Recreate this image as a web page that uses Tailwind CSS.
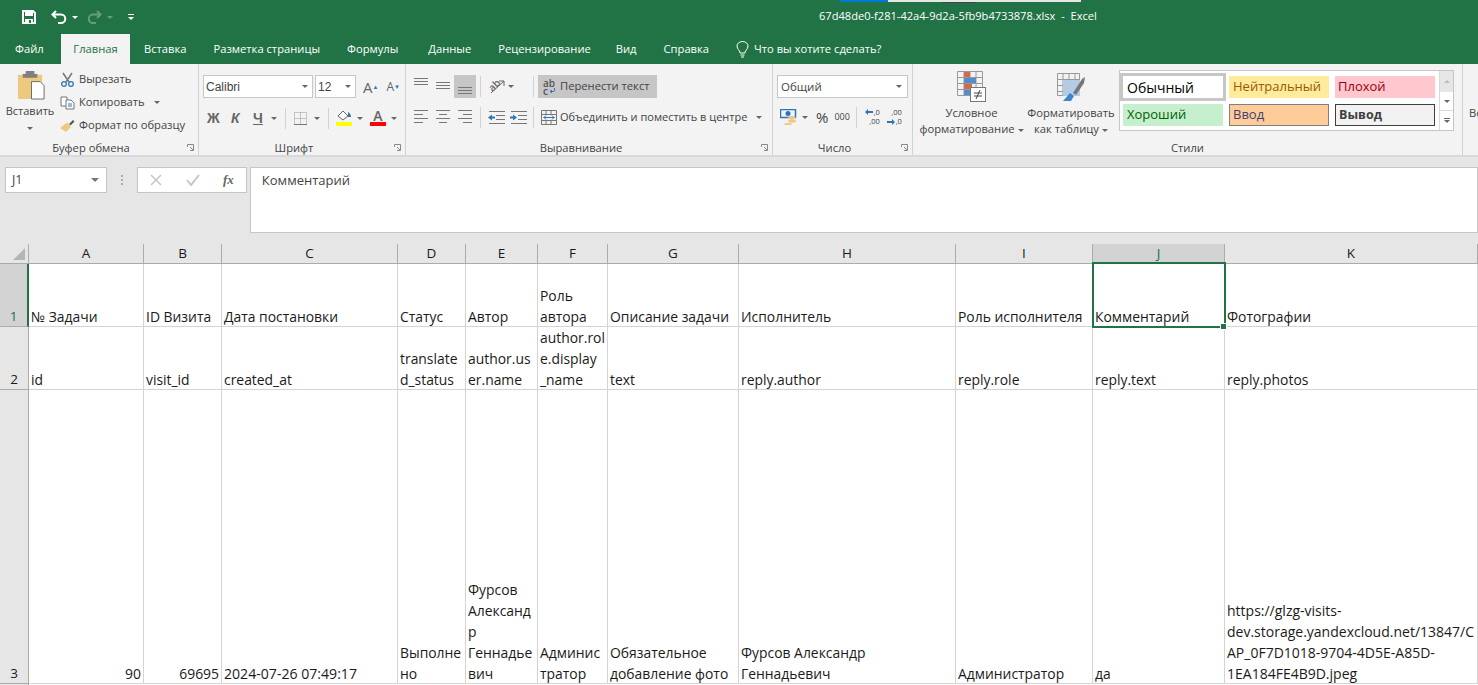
<!DOCTYPE html>
<html lang="ru">
<head>
<meta charset="UTF-8">
<title>67d48de0-f281-42a4-9d2a-5fb9b4733878.xlsx - Excel</title>
<script src="https://cdn.jsdelivr.net/npm/@tailwindcss/browser@4"></script>
</head>
<body class="w-[1478px] h-[685px] overflow-hidden bg-white font-['Open_Sans',sans-serif] text-[11.2px] text-[#444]">

<!-- title bar + tabs -->
<div class="h-[64px] bg-[#217346] text-white relative">
  <div class="h-[34px] flex items-center pl-[22px]">
    <svg width="14" height="14" viewBox="0 0 14 14"><path d="M1 1h10l2 2v10H1z" fill="none" stroke="#fff" stroke-width="2"/><path d="M3 1h8v5H3zM3 9h8v4H3z" fill="#fff"/><path d="M7 10h2v3H7z" fill="#217346"/></svg>
    <div class="flex items-center gap-[4px] ml-[15px]">
      <svg width="17" height="14" viewBox="0 0 17 14"><path d="M5 1 1.500 4.500 5 8M2 4.500h8a4 4 0 0 1 0 8.500H7" fill="none" stroke="#fff" stroke-width="2"/></svg>
      <span class="w-0 h-0 border-x-[3px] border-x-transparent border-t-[3px] border-t-white"></span>
    </div>
    <div class="flex items-center gap-[5px] opacity-30 ml-[9px]">
      <svg width="15" height="14" viewBox="0 0 15 14"><path d="M10 1l3.500 3.500L10 8M13 4.500H6a4 4 0 0 0 0 8.500h3" fill="none" stroke="#fff" stroke-width="2"/></svg>
      <span class="w-0 h-0 border-x-[3px] border-x-transparent border-t-[3px] border-t-white"></span>
    </div>
    <div class="flex flex-col items-center gap-[2px] ml-[15px]">
      <span class="w-[6px] h-px bg-white"></span>
      <span class="w-0 h-0 border-x-[3px] border-x-transparent border-t-[3px] border-t-white"></span>
    </div>
  </div>
  <div class="absolute left-[819px] top-[8px] text-[11.100px] whitespace-nowrap">67d48de0-f281-42a4-9d2a-5fb9b4733878.xlsx&nbsp; -&nbsp; Excel</div>
  <div class="absolute left-[840px] top-0 w-[48px] h-[2px] bg-[#0078d7]"></div>
  <div class="absolute left-[888px] top-0 w-[193px] h-[2px] bg-[#e6e6e6]"></div>
  <div class="absolute left-[942px] top-[2px] w-[34px] h-px bg-[#444]"></div>
  <div class="h-[30px] flex items-center text-[11.200px] whitespace-nowrap">
    <span class="w-[61px] pl-[15px]">Файл</span>
    <span class="w-[69px] h-[30px] bg-[#f3f3f3] text-[#217346] flex items-center justify-center">Главная</span>
    <span class="ml-[14px]">Вставка</span>
    <span class="ml-[27px]">Разметка страницы</span>
    <span class="ml-[27px]">Формулы</span>
    <span class="ml-[30px]">Данные</span>
    <span class="ml-[27px]">Рецензирование</span>
    <span class="ml-[25px]">Вид</span>
    <span class="ml-[27px]">Справка</span>
    <svg class="ml-[27px] mr-[5px]" width="13" height="17" viewBox="0 0 13 17"><path d="M4 12c0-3-3-3.500-3-7a5.500 4.500 0 0 1 11 0c0 3.500-3 4-3 7zM4.500 14h4M5 16h3" fill="none" stroke="#fff"/></svg>
    <span>Что вы хотите сделать?</span>
  </div>
</div>

<!-- ribbon -->
<div class="h-[93px] bg-[#f3f3f3] border-b-2 border-[#d9d9d9] flex relative">

  <!-- clipboard -->
  <div class="w-[199px] h-[91px] border-r border-[#d2d2d2] relative shrink-0">
    <div class="flex h-[76px]">
      <div class="w-[60px] flex flex-col items-center pt-[7px]">
        <svg class="ml-[3px]" width="29" height="29" viewBox="0 0 30 30"><rect x="1" y="4" width="25" height="25" rx="1" fill="#edc87e"/><rect x="9" y="0" width="9" height="6" fill="#7f7f7f"/><rect x="6" y="3" width="15" height="4" fill="#7f7f7f"/><path d="M15 11h9l4 4v14H15z" fill="#fff" stroke="#6d6d6d"/></svg>
        <span class="mt-[3px] text-[11px]">Вставить</span>
        <span class="mt-[7px] w-0 h-0 border-x-[3px] border-x-transparent border-t-[3px] border-t-[#666]"></span>
      </div>
      <div class="flex flex-col pt-[4px] whitespace-nowrap">
        <div class="h-[23px] flex items-center gap-[4px]">
          <svg width="15" height="15" viewBox="0 0 15 15"><path d="M3 1l6 9M12 1l-6 9" stroke="#777" stroke-width="1.500"/><circle cx="4" cy="12" r="2.300" fill="none" stroke="#2f75b5" stroke-width="1.300"/><circle cx="11" cy="12" r="2.300" fill="none" stroke="#2f75b5" stroke-width="1.300"/></svg>
          <span>Вырезать</span>
        </div>
        <div class="h-[23px] flex items-center gap-[4px]">
          <svg width="15" height="14" viewBox="0 0 15 14"><path d="M1 1h6v9H1z" fill="#fff" stroke="#777"/><path d="M6 4h5l3 3v6H6z" fill="#fff" stroke="#777"/><path d="M8 8h4M8 10h4" stroke="#2f75b5"/></svg>
          <span>Копировать</span>
          <span class="ml-[5px] w-0 h-0 border-x-[3px] border-x-transparent border-t-[3px] border-t-[#666]"></span>
        </div>
        <div class="h-[23px] flex items-center gap-[4px]">
          <svg width="15" height="14" viewBox="0 0 15 14"><path d="M9 5l4-4 1.500 1.500-4 4z" fill="#555"/><path d="M7 3.500 11 8 6 13 0 9z" fill="#edc87e"/></svg>
          <span>Формат по образцу</span>
        </div>
      </div>
    </div>
    <div class="absolute left-0 right-[16px] top-[76px] text-center whitespace-nowrap">Буфер обмена</div>
    <svg class="absolute right-[4px] bottom-[4px]" width="7" height="7" viewBox="0 0 7 7"><path d="M.5 3V.5H6.500V6.500H3M3 3l3 3" fill="none" stroke="#888"/></svg>
  </div>

  <!-- font -->
  <div class="w-[207px] h-[91px] border-r border-[#d2d2d2] relative shrink-0 pl-[4px]">
    <div class="flex items-center mt-[11px] gap-[2px]">
      <div class="w-[110px] h-[23px] bg-white border border-[#c6c6c6] flex items-center justify-between px-[2px] font-['Liberation_Sans',sans-serif] text-[12px]">Calibri<span class="w-0 h-0 mr-[2px] border-x-[3px] border-x-transparent border-t-[3px] border-t-[#666]"></span></div>
      <div class="w-[41px] h-[23px] bg-white border border-[#c6c6c6] flex items-center justify-between px-[2px] font-['Liberation_Sans',sans-serif] text-[12px]">12<span class="w-0 h-0 mr-[2px] border-x-[3px] border-x-transparent border-t-[3px] border-t-[#666]"></span></div>
      <div class="ml-[5px] flex items-start gap-[8px] text-[#666]">
        <span class="text-[15px] leading-[16px]">A<span class="align-top text-[#2f75b5] text-[6px]">▲</span></span>
        <span class="text-[12px] leading-[16px]">A<span class="align-top text-[#2f75b5] text-[6px]">▼</span></span>
      </div>
    </div>
    <div class="flex items-center h-[22px] mt-[9px] pl-[4px] text-[#666] whitespace-nowrap">
      <span class="w-[24px] font-bold font-['Liberation_Sans',sans-serif] text-[14px]">Ж</span>
      <span class="w-[22px] font-bold italic font-['Liberation_Sans',sans-serif] text-[14px]">К</span>
      <span class="w-[18px] font-bold underline font-['Liberation_Sans',sans-serif] text-[14px]">Ч</span>
      <span class="w-0 h-0 border-x-[3px] border-x-transparent border-t-[3px] border-t-[#666]"></span>
      <span class="w-px h-[21px] bg-[#d2d2d2] mx-[8px]"></span>
      <svg width="13" height="13" viewBox="0 0 13 13"><path d="M.5.500h12v12H.5zM6.500.500v12M.5 6.500h12" fill="none" stroke="#999" stroke-dasharray="1 1"/><path d="M0 12.500h13" stroke="#777"/></svg>
      <span class="ml-[7px] w-0 h-0 border-x-[3px] border-x-transparent border-t-[3px] border-t-[#666]"></span>
      <span class="w-px h-[21px] bg-[#d2d2d2] ml-[8px] mr-[7px]"></span>
      <div class="flex flex-col items-center w-[16px]">
        <svg width="16" height="11" viewBox="0 0 16 11"><path d="M2 6l5-5 5 5-5 4z" fill="#fff" stroke="#666"/><path d="M12 2c2 1 3 3 3 5h-3z" fill="#2f75b5"/></svg>
        <span class="w-[16px] h-[4px] bg-[#ffff00] mt-px"></span>
      </div>
      <span class="ml-[5px] w-0 h-0 border-x-[3px] border-x-transparent border-t-[3px] border-t-[#666]"></span>
      <div class="ml-[7px] flex flex-col items-center w-[16px]">
        <span class="text-[14px] leading-[11px] font-semibold">A</span>
        <span class="w-[16px] h-[4px] bg-[#ff0000] mt-[1px]"></span>
      </div>
      <span class="ml-[5px] w-0 h-0 border-x-[3px] border-x-transparent border-t-[3px] border-t-[#666]"></span>
    </div>
    <div class="absolute left-0 right-[16px] top-[76px] text-center">Шрифт</div>
    <svg class="absolute right-[4px] bottom-[4px]" width="7" height="7" viewBox="0 0 7 7"><path d="M.5 3V.5H6.500V6.500H3M3 3l3 3" fill="none" stroke="#888"/></svg>
  </div>

  <!-- alignment -->
  <div class="w-[367px] h-[91px] border-r border-[#d2d2d2] relative shrink-0 pl-[4px]">
    <div class="flex items-center mt-[11px] h-[23px]">
      <svg class="mx-[1px]" width="20" height="23" viewBox="0 0 20 23"><path d="M3 3.500h14M3 6.500h14M3 9.500h14" stroke="#777"/></svg>
      <svg class="mx-[1px]" width="20" height="23" viewBox="0 0 20 23"><path d="M3 7.500h14M3 10.500h14M3 13.500h14" stroke="#777"/></svg>
      <svg class="bg-[#c6c6c6]" width="22" height="23" viewBox="0 0 22 23"><path d="M4 12.500h14M4 15.500h14M4 18.500h14" stroke="#777"/></svg>
      <span class="w-px h-[21px] bg-[#d2d2d2] ml-[4px] mr-[7px]"></span>
      <div class="relative w-[17px] h-[15px]">
        <span class="absolute left-0 top-0 text-[10px] leading-[12px] font-semibold text-[#666] -rotate-45">ab</span>
        <svg class="absolute left-0 top-0" width="17" height="15" viewBox="0 0 17 15"><path d="M3 14 16 2M11 2h5v5" fill="none" stroke="#666"/></svg>
      </div>
      <span class="ml-[3px] w-0 h-0 border-x-[3px] border-x-transparent border-t-[3px] border-t-[#666]"></span>
      <span class="w-px h-[21px] bg-[#d2d2d2] ml-[19px] mr-[4px]"></span>
      <div class="h-[23px] w-[119px] bg-[#c6c6c6] flex items-center pl-[5px] whitespace-nowrap">
        <div class="w-[12px] mr-[5px] text-[10px] leading-[8px] font-semibold text-[#555]">
          <div>ab</div>
          <div class="flex items-center gap-[1px]">c<svg width="6" height="6" viewBox="0 0 6 6"><path d="M5.500 0v2.500a1 1 0 0 1-1 1H1M1 3.500l2-1.500M1 3.500 3 5" fill="none" stroke="#2f75b5"/></svg></div>
        </div>
        <span>Перенести текст</span>
      </div>
    </div>
    <div class="flex items-center mt-[8px] h-[23px]">
      <svg class="mx-[1px]" width="20" height="23" viewBox="0 0 20 23"><path d="M3 4.500h14M3 8.500h9M3 12.500h14M3 16.500h9" stroke="#777"/></svg>
      <svg class="mx-[1px]" width="20" height="23" viewBox="0 0 20 23"><path d="M3 4.500h14M6 8.500h8M3 12.500h14M6 16.500h8" stroke="#777"/></svg>
      <svg width="22" height="23" viewBox="0 0 22 23"><path d="M4 4.500h14M9 8.500h9M4 12.500h14M9 16.500h9" stroke="#777"/></svg>
      <span class="w-px h-[21px] bg-[#d2d2d2] ml-[4px] mr-[7px]"></span>
      <svg width="18" height="14" viewBox="0 0 18 14"><path d="M1 .500h16M8 4.500h9M8 8.500h9M1 12.500h16" stroke="#777"/><path d="M0 6.500l4-3v2h3v2H4v2z" fill="#2f75b5"/></svg>
      <svg class="ml-[4px]" width="18" height="14" viewBox="0 0 18 14"><path d="M1 .500h16M8 4.500h9M8 8.500h9M1 12.500h16" stroke="#777"/><path d="M7 6.500l-4-3v2H0v2h3v2z" fill="#2f75b5"/></svg>
      <span class="w-px h-[21px] bg-[#d2d2d2] ml-[5px] mr-[4px]"></span>
      <div class="h-[23px] flex items-center pl-[3px] whitespace-nowrap text-[11px]">
        <svg class="mr-[3px]" width="16" height="15" viewBox="0 0 16 15"><path d="M.5.500h15v14H.5zM.5 4.500h15M.5 10.500h15M5 .500v4M10 .500v4M5 10.500v4M10 10.500v4" fill="none" stroke="#777"/><path d="M2.500 7.500h11M3 7.500l2-2M3 7.500l2 2M13 7.500l-2-2M13 7.500l-2 2" fill="none" stroke="#2f75b5"/></svg>
        <span>Объединить и поместить в центре</span>
        <span class="ml-[9px] w-0 h-0 border-x-[3px] border-x-transparent border-t-[3px] border-t-[#666]"></span>
      </div>
    </div>
    <div class="absolute left-0 right-[16px] top-[76px] text-center">Выравнивание</div>
    <svg class="absolute right-[4px] bottom-[4px]" width="7" height="7" viewBox="0 0 7 7"><path d="M.5 3V.5H6.500V6.500H3M3 3l3 3" fill="none" stroke="#888"/></svg>
  </div>

  <!-- number -->
  <div class="w-[140px] h-[91px] border-r border-[#d2d2d2] relative shrink-0 pl-[4px]">
    <div class="w-[131px] h-[23px] mt-[11px] bg-white border border-[#c6c6c6] flex items-center justify-between px-[3px] text-[11.500px]">Общий<span class="w-0 h-0 mr-[2px] border-x-[3px] border-x-transparent border-t-[3px] border-t-[#666]"></span></div>
    <div class="flex items-center h-[22px] mt-[8px] pl-[3px] whitespace-nowrap">
      <svg width="17" height="16" viewBox="0 0 17 16"><rect x=".5" y=".5" width="15" height="8" fill="none" stroke="#2f75b5" stroke-width="1.500"/><circle cx="8" cy="4.500" r="2.500" fill="#2f75b5"/><ellipse cx="12" cy="9" rx="4" ry="1.500" fill="#edc87e"/><ellipse cx="12" cy="12" rx="4" ry="1.500" fill="#edc87e"/><ellipse cx="8" cy="15" rx="4" ry="1" fill="#edc87e"/></svg>
      <span class="ml-[5px] w-0 h-0 border-x-[3px] border-x-transparent border-t-[3px] border-t-[#666]"></span>
      <span class="ml-[8px] text-[15px] leading-none">%</span>
      <span class="ml-[6px] text-[9px]">000</span>
      <span class="w-px h-[21px] bg-[#d2d2d2] ml-[6px] mr-[8px]"></span>
      <span class="relative w-[15px] h-[18px] flex flex-col items-end text-[7.500px] leading-[9px]"><span>,0</span><span>,00</span><svg class="absolute left-0 top-[1px]" width="8" height="6" viewBox="0 0 8 6"><path d="M0 3l3-3v2h5v2H3v2z" fill="#2f75b5"/></svg></span>
      <span class="ml-[7px] relative w-[15px] h-[18px] flex flex-col items-end text-[7.500px] leading-[9px]"><span>,00</span><span>,0</span><svg class="absolute left-0 bottom-[1px]" width="8" height="6" viewBox="0 0 8 6"><path d="M8 3 5 0v2H0v2h5v2z" fill="#2f75b5"/></svg></span>
    </div>
    <div class="absolute left-0 right-[16px] top-[76px] text-center">Число</div>
    <svg class="absolute right-[4px] bottom-[4px]" width="7" height="7" viewBox="0 0 7 7"><path d="M.5 3V.5H6.500V6.500H3M3 3l3 3" fill="none" stroke="#888"/></svg>
  </div>

  <!-- styles -->
  <div class="w-[550px] h-[91px] border-r border-[#d2d2d2] relative shrink-0 flex">
    <div class="w-[117px] flex flex-col items-center pt-[7px] leading-[16px] text-center whitespace-nowrap">
      <svg width="30" height="31" viewBox="0 0 30 31"><path d="M.5.5h25v24H.5zM.5 6.500h25M.5 12.500h25M.5 18.500h25M7 .5v24M13 .5v24M19 .5v24" fill="none" stroke="#999"/><path d="M7 1h6v5H7zM7 13h8v5H7z" fill="#d9674a"/><path d="M7 7h12v5H7zM7 19h6v5H7z" fill="#4f8fcb"/><rect x="13.500" y="16.500" width="15" height="14" fill="#fff" stroke="#777"/><path d="M17 22h8M17 25h8M23 19l-4 9" stroke="#444"/></svg>
      <span class="mt-[3px]">Условное</span>
      <span>форматирование<span class="inline-block ml-[3px] align-middle w-0 h-0 border-x-[3px] border-x-transparent border-t-[3px] border-t-[#666]"></span></span>
    </div>
    <div class="w-[82px] flex flex-col items-center pt-[7px] leading-[16px] text-center whitespace-nowrap">
      <svg width="29" height="31" viewBox="0 0 29 31"><path d="M.5 2.500h22v22H.5zM.5 8.500h22M.5 14.500h22M.5 20.500h22M6 2.500v22M12 2.500v22M18 2.500v22" fill="none" stroke="#999"/><path d="M6 9h17v16H6z" fill="#b4cbe6"/><path d="M6 30l7-8 4 3-3 5z" fill="#3f85c9"/><path d="M16 22l9-14 3-2-1 6-8 12z" fill="#777"/></svg>
      <span class="mt-[3px]">Форматировать</span>
      <span>как таблицу<span class="inline-block ml-[3px] align-middle w-0 h-0 border-x-[3px] border-x-transparent border-t-[3px] border-t-[#666]"></span></span>
    </div>
    <div class="w-[335px] h-[61px] mt-[6px] ml-[7px] flex border border-[#c6c6c6] bg-white text-[13px]">
      <div class="w-[313px] pt-[2px] grid grid-cols-[107px_106px_100px] grid-rows-[28px_28px] items-center justify-items-start">
        <div class="w-[106px] h-[28px] border-[3px] border-[#c6c6c6] flex items-center pl-[4px] text-black text-[14px]">Обычный</div>
        <div class="ml-[2px] w-[100px] h-[22px] bg-[#ffeb9c] text-[#9c5700] flex items-center pl-[4px]">Нейтральный</div>
        <div class="ml-[2px] w-[100px] h-[22px] bg-[#ffc7ce] text-[#9c0006] flex items-center pl-[3px]">Плохой</div>
        <div class="ml-[3px] w-[100px] h-[22px] bg-[#c6efce] text-[#006100] flex items-center pl-[4px]">Хороший</div>
        <div class="ml-[2px] w-[100px] h-[22px] bg-[#ffcc99] border border-[#7f7f7f] text-[#3f3f76] flex items-center pl-[3px]">Ввод</div>
        <div class="ml-[2px] w-[100px] h-[22px] bg-[#f2f2f2] border border-[#3f3f3f] text-[#3f3f3f] font-bold text-[12.500px] flex items-center pl-[3px]">Вывод</div>
      </div>
      <div class="w-[14px] ml-auto flex flex-col bg-white border-l border-[#d9d9d9]">
        <div class="h-[21px] bg-[#e6e6e6] flex items-center justify-center"><span class="w-0 h-0 border-x-[3px] border-x-transparent border-b-[3px] border-b-[#bbb]"></span></div>
        <div class="h-[19px] border-b border-[#d9d9d9] flex items-center justify-center"><span class="w-0 h-0 border-x-[3px] border-x-transparent border-t-[3px] border-t-[#666]"></span></div>
        <div class="flex-1 flex flex-col items-center justify-center gap-px"><span class="w-[6px] h-px bg-[#666]"></span><span class="w-0 h-0 border-x-[3px] border-x-transparent border-t-[3px] border-t-[#666]"></span></div>
      </div>
    </div>
    <div class="absolute left-0 right-0 top-[76px] text-center">Стили</div>
  </div>
  <div class="pl-[6px] pt-[41px] whitespace-nowrap overflow-hidden">Вс</div>
</div>

<!-- formula bar -->
<div class="h-[87px] bg-[#e6e6e6] flex pt-[10px] pl-[5px] items-start">
  <div class="w-[102px] h-[26px] bg-white border border-[#c6c6c6] flex items-center justify-between pl-[6px] pr-[7px] text-[12.500px]">J1<span class="w-0 h-0 border-x-[4px] border-x-transparent border-t-[4px] border-t-[#777]"></span></div>
  <div class="w-[30px] h-[26px] flex items-center justify-center"><span class="flex flex-col gap-[2px]"><i class="block w-[2px] h-[2px] bg-[#aaa]"></i><i class="block w-[2px] h-[2px] bg-[#aaa]"></i><i class="block w-[2px] h-[2px] bg-[#aaa]"></i></span></div>
  <div class="w-[110px] h-[26px] bg-white border border-[#c6c6c6] flex items-center">
    <svg class="ml-[12px]" width="12" height="12" viewBox="0 0 12 12"><path d="M1 1l10 10M11 1 1 11" stroke="#c6c6c6" stroke-width="1.500"/></svg>
    <svg class="ml-[24px]" width="14" height="12" viewBox="0 0 14 12"><path d="M1 6l4 5 8-10" fill="none" stroke="#c6c6c6" stroke-width="2"/></svg>
    <span class="ml-[23px] font-['Liberation_Serif',serif] italic font-bold text-[13px] text-[#666]">fx</span>
  </div>
  <div class="ml-[3px] w-[1229px] h-[66px] bg-white border border-[#c6c6c6] pl-[11px] pt-[3px] text-[13px]">Комментарий</div>
</div>

<!-- sheet -->
<div class="grid h-[441px] grid-cols-[29px_115px_78px_176px_68px_72px_70px_131px_217px_137px_132px_253px] grid-rows-[20px_63px_63px_294px_1fr] text-[13.900px] leading-[21px] text-[#1a1a1a]">
  <!-- column headers -->
  <div class="bg-[#e6e6e6] border-b border-r border-[#ababab] relative"><span class="absolute right-[3px] bottom-[3px] w-0 h-0 border-l-[12px] border-l-transparent border-b-[12px] border-b-[#b5b5b5]"></span></div>
  <div class="bg-[#e6e6e6] border-b border-r border-[#ababab] flex items-center justify-center text-[13.500px]">A</div>
  <div class="bg-[#e6e6e6] border-b border-r border-[#ababab] flex items-center justify-center text-[13.500px]">B</div>
  <div class="bg-[#e6e6e6] border-b border-r border-[#ababab] flex items-center justify-center text-[13.500px]">C</div>
  <div class="bg-[#e6e6e6] border-b border-r border-[#ababab] flex items-center justify-center text-[13.500px]">D</div>
  <div class="bg-[#e6e6e6] border-b border-r border-[#ababab] flex items-center justify-center text-[13.500px]">E</div>
  <div class="bg-[#e6e6e6] border-b border-r border-[#ababab] flex items-center justify-center text-[13.500px]">F</div>
  <div class="bg-[#e6e6e6] border-b border-r border-[#ababab] flex items-center justify-center text-[13.500px]">G</div>
  <div class="bg-[#e6e6e6] border-b border-r border-[#ababab] flex items-center justify-center text-[13.500px]">H</div>
  <div class="bg-[#e6e6e6] border-b border-r border-[#ababab] flex items-center justify-center text-[13.500px]">I</div>
  <div class="bg-[#d2d2d2] border-b border-r border-[#ababab] flex items-center justify-center text-[13.500px] text-[#217346]">J</div>
  <div class="bg-[#e6e6e6] border-b border-r border-[#ababab] flex items-center justify-center text-[13.500px]">K</div>

  <!-- row 1 -->
  <div class="bg-[#d2d2d2] border-b border-b-[#ababab] border-r-2 border-r-[#217346] flex items-end justify-center text-[13.500px] text-[#217346]"><span class="-mb-[1px]">1</span></div>
  <div class="border-b border-r border-[#d4d4d4] flex items-end px-[2px]"><span class="-mb-[1px]">№ Задачи</span></div>
  <div class="border-b border-r border-[#d4d4d4] flex items-end px-[2px] whitespace-nowrap"><span class="-mb-[1px]">ID Визита</span></div>
  <div class="border-b border-r border-[#d4d4d4] flex items-end px-[2px]"><span class="-mb-[1px]">Дата постановки</span></div>
  <div class="border-b border-r border-[#d4d4d4] flex items-end px-[2px]"><span class="-mb-[1px]">Статус</span></div>
  <div class="border-b border-r border-[#d4d4d4] flex items-end px-[2px]"><span class="-mb-[1px]">Автор</span></div>
  <div class="border-b border-r border-[#d4d4d4] flex items-end px-[2px]"><span class="-mb-[1px]">Роль автора</span></div>
  <div class="border-b border-r border-[#d4d4d4] flex items-end px-[2px] whitespace-nowrap"><span class="-mb-[1px]">Описание задачи</span></div>
  <div class="border-b border-r border-[#d4d4d4] flex items-end px-[2px]"><span class="-mb-[1px]">Исполнитель</span></div>
  <div class="border-b border-r border-[#d4d4d4] flex items-end px-[2px] whitespace-nowrap"><span class="-mb-[1px]">Роль исполнителя</span></div>
  <div class="border-b border-r border-[#d4d4d4] flex items-end px-[2px] relative"><span class="-mb-[1px]">Комментарий</span>
    <span class="absolute -left-[1px] -top-[2px] -right-[2px] -bottom-[2px] border-2 border-[#217346]"></span>
    <span class="absolute -right-[3px] -bottom-[4px] w-[5px] h-[5px] bg-[#217346] border border-white box-content"></span>
  </div>
  <div class="border-b border-r border-[#d4d4d4] flex items-end px-[2px]"><span class="-mb-[1px]">Фотографии</span></div>

  <!-- row 2 -->
  <div class="bg-[#e6e6e6] border-b border-r border-[#ababab] flex items-end justify-center text-[13.500px]"><span class="-mb-[1px]">2</span></div>
  <div class="border-b border-r border-[#d4d4d4] flex items-end px-[2px]"><span class="-mb-[1px]">id</span></div>
  <div class="border-b border-r border-[#d4d4d4] flex items-end px-[2px]"><span class="-mb-[1px]">visit_id</span></div>
  <div class="border-b border-r border-[#d4d4d4] flex items-end px-[2px]"><span class="-mb-[1px]">created_at</span></div>
  <div class="border-b border-r border-[#d4d4d4] flex items-end px-[2px]"><span class="-mb-[1px]">translate<br>d_status</span></div>
  <div class="border-b border-r border-[#d4d4d4] flex items-end px-[2px]"><span class="-mb-[1px]">author.us<br>er.name</span></div>
  <div class="border-b border-r border-[#d4d4d4] flex items-end px-[2px]"><span class="-mb-[1px]">author.rol<br>e.display<br>_name</span></div>
  <div class="border-b border-r border-[#d4d4d4] flex items-end px-[2px]"><span class="-mb-[1px]">text</span></div>
  <div class="border-b border-r border-[#d4d4d4] flex items-end px-[2px]"><span class="-mb-[1px]">reply.author</span></div>
  <div class="border-b border-r border-[#d4d4d4] flex items-end px-[2px]"><span class="-mb-[1px]">reply.role</span></div>
  <div class="border-b border-r border-[#d4d4d4] flex items-end px-[2px]"><span class="-mb-[1px]">reply.text</span></div>
  <div class="border-b border-r border-[#d4d4d4] flex items-end px-[2px]"><span class="-mb-[1px]">reply.photos</span></div>

  <!-- row 3 -->
  <div class="bg-[#e6e6e6] border-b border-r border-[#ababab] flex items-end justify-center text-[13.500px]"><span class="-mb-[1px]">3</span></div>
  <div class="border-b border-r border-[#d4d4d4] flex items-end justify-end px-[2px]"><span class="-mb-[1px]">90</span></div>
  <div class="border-b border-r border-[#d4d4d4] flex items-end justify-end px-[2px]"><span class="-mb-[1px]">69695</span></div>
  <div class="border-b border-r border-[#d4d4d4] flex items-end px-[2px] text-[14.100px]"><span class="-mb-[1px]">2024-07-26 07:49:17</span></div>
  <div class="border-b border-r border-[#d4d4d4] flex items-end px-[2px]"><span class="-mb-[1px]">Выполне<br>но</span></div>
  <div class="border-b border-r border-[#d4d4d4] flex items-end px-[2px]"><span class="-mb-[1px]">Фурсов<br>Александ<br>р<br>Геннадье<br>вич</span></div>
  <div class="border-b border-r border-[#d4d4d4] flex items-end px-[2px]"><span class="-mb-[1px]">Админис<br>тратор</span></div>
  <div class="border-b border-r border-[#d4d4d4] flex items-end px-[2px] whitespace-nowrap"><span class="-mb-[1px]">Обязательное<br>добавление фото</span></div>
  <div class="border-b border-r border-[#d4d4d4] flex items-end px-[2px]"><span class="-mb-[1px]">Фурсов Александр<br>Геннадьевич</span></div>
  <div class="border-b border-r border-[#d4d4d4] flex items-end px-[2px]"><span class="-mb-[1px]">Администратор</span></div>
  <div class="border-b border-r border-[#d4d4d4] flex items-end px-[2px]"><span class="-mb-[1px]">да</span></div>
  <div class="border-b border-r border-[#d4d4d4] flex items-end px-[2px] whitespace-nowrap text-[14px]"><span class="-mb-[1px]">https://glzg-visits-<br>dev.storage.yandexcloud.net/13847/C<br>AP_0F7D1018-9704-4D5E-A85D-<br>1EA184FE4B9D.jpeg</span></div>

  <!-- top of row 4 -->
  <div class="bg-[#e6e6e6] border-r border-[#ababab]"></div>
</div>
</body>
</html>
